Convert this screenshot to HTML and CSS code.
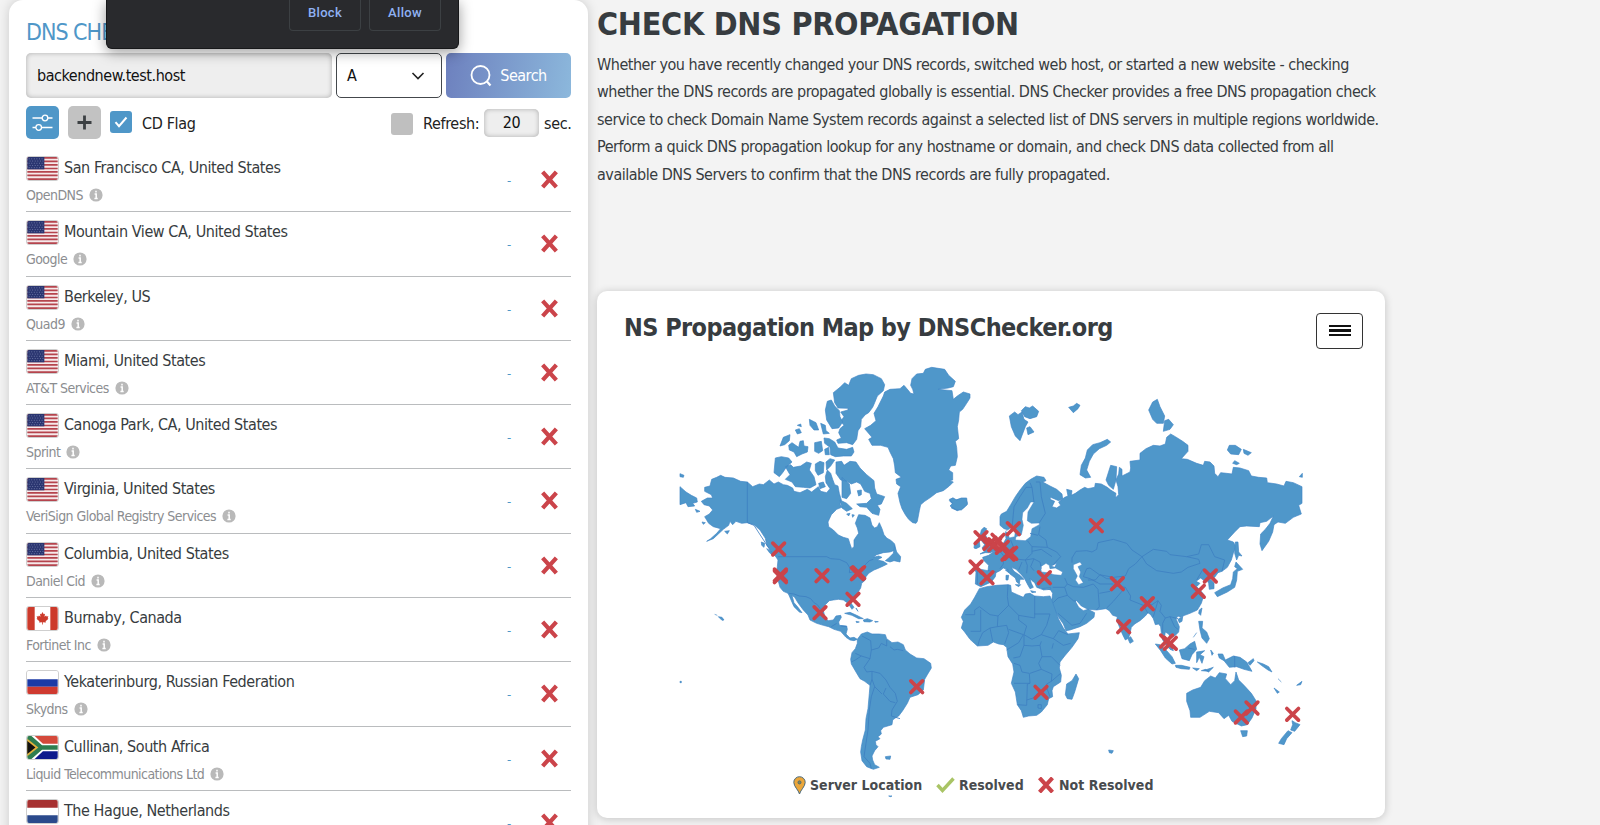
FILE: index.html
```html
<!DOCTYPE html>
<html lang="en">
<head>
<meta charset="utf-8">
<title>DNS Checker</title>
<link rel="stylesheet" href="styles.css">
</head>
<body>
<svg class="defs" width="0" height="0">
  <defs>
    <symbol id="cross" viewBox="0 0 18 18"><path d="M2.500 1.800 15.500 16.200M15.500 1.800 2.500 16.200" stroke="#cb444a" stroke-width="4"/></symbol>
    <symbol id="info" viewBox="0 0 14 14"><circle cx="7" cy="7" r="6.600" fill="#b9b9b9"/><path d="M7 2.700v1.800M5.600 6h1.600v4.300M5.400 10.500h3.300" stroke="#fff" stroke-width="1.500" fill="none"/></symbol>
    <symbol id="us" viewBox="0 0 33 25"><rect width="33" height="25" fill="#f6e9ea"/><path d="M0 1h33M0 4.800h33M0 8.600h33M0 12.500h33M0 16.300h33M0 20.100h33M0 24h33" stroke="#b5444d" stroke-width="1.900"/><rect width="18.500" height="13.400" fill="#2a3570"/><path d="M1.500 2h16M2.500 4.400h15M1.500 6.800h16M2.500 9.200h15M1.500 11.600h16" stroke="#8791bc" stroke-width=".8" stroke-dasharray="1 1.800"/></symbol>
    <symbol id="ca" viewBox="0 0 33 25"><rect width="33" height="25" fill="#fff"/><path d="M0 0h8v25H0zM25 0h8v25h-8z" fill="#cc3a2b"/><path d="m16.500 5.500 1.300 2.400 1.400-.6-.5 3.300 1.700-1.400.5 1.200 2-.3-.8 2.100.9.600-3.100 2.800.3 1.300-3.300-.4V19h-.8v-2.500l-3.300.4.300-1.300L10 12.800l.9-.6-.8-2.100 2 .3.500-1.200 1.700 1.400-.5-3.300 1.400.6z" fill="#cc3a2b"/></symbol>
    <symbol id="ru" viewBox="0 0 33 25"><rect width="33" height="25" fill="#fff"/><path d="M0 9h33v8H0z" fill="#1c3aa6"/><path d="M0 17h33v8H0z" fill="#cf3a30"/></symbol>
    <symbol id="za" viewBox="0 0 33 25"><rect width="33" height="25" fill="#fff"/><path d="M8 0h25v8.500H17z" fill="#d4493b"/><path d="M8 25h25v-8.500H17z" fill="#0d1a8c"/><path d="M0 0h4.500L16 10h17v5H16L4.500 25H0z" fill="#2e7d4f"/><path d="M0 3v19l12-9.500z" fill="#e2b13c"/><path d="M0 5.500v14l8.800-7z" fill="#111"/></symbol>
    <symbol id="nl" viewBox="0 0 33 25"><rect width="33" height="25" fill="#fff"/><path d="M0 0h33v8.300H0z" fill="#a73131"/><path d="M0 16.700h33V25H0z" fill="#2b4a8c"/></symbol>
  </defs>
</svg>

<div class="page">
  <section class="checker">
    <h2 class="checker-title">DNS CHECK</h2>
    <div class="search">
      <div class="host">backendnew.test.host</div>
      <div class="type"><span>A</span><svg width="14" height="14" viewBox="0 0 14 14"><path d="m1.500 4 5.500 5.500 5.500-5.500" fill="none" stroke="#222" stroke-width="1.600"/></svg></div>
      <div class="go"><svg width="22" height="22" viewBox="0 0 22 22"><circle cx="10.500" cy="10" r="9" fill="none" stroke="#fff" stroke-width="1.800"/><path d="m16.500 16 4 4.500" stroke="#fff" stroke-width="2.200"/></svg><span>Search</span></div>
    </div>
    <div class="options">
      <span class="tool tool-on"><svg width="21" height="18" viewBox="0 0 21 18"><g fill="none" stroke="#fff" stroke-width="1.300"><path d="M.5 4H10M16 4h4.500M.5 13.500H4M9.500 13.500h11"/><circle cx="13" cy="4" r="2.800"/><circle cx="6.700" cy="13.500" r="2.800"/></g></svg></span>
      <span class="tool"><svg width="15" height="15" viewBox="0 0 15 15"><path d="M7.500.5v14M.5 7.500h14" stroke="#3c4043" stroke-width="2.800"/></svg></span>
      <span class="check check-on"><svg width="14" height="12" viewBox="0 0 14 12"><path d="m1.500 6.200 3.500 4L12.500 1.500" fill="none" stroke="#fff" stroke-width="2"/></svg></span>
      <span class="flag-label">CD Flag</span>
      <span class="check refresh-check"></span>
      <span class="refresh-label">Refresh:</span>
      <span class="secs">20</span>
      <span class="sec-label">sec.</span>
    </div>
    <ul class="servers">
      <li class="server"><div class="who"><div class="place"><svg class="flag"><use href="#us"/></svg><span>San Francisco CA, United States</span></div><div class="isp"><span>OpenDNS</span><svg class="info"><use href="#info"/></svg></div></div><span class="dash">-</span><svg class="bad"><use href="#cross"/></svg></li>
      <li class="server"><div class="who"><div class="place"><svg class="flag"><use href="#us"/></svg><span>Mountain View CA, United States</span></div><div class="isp"><span>Google</span><svg class="info"><use href="#info"/></svg></div></div><span class="dash">-</span><svg class="bad"><use href="#cross"/></svg></li>
      <li class="server"><div class="who"><div class="place"><svg class="flag"><use href="#us"/></svg><span>Berkeley, US</span></div><div class="isp"><span>Quad9</span><svg class="info"><use href="#info"/></svg></div></div><span class="dash">-</span><svg class="bad"><use href="#cross"/></svg></li>
      <li class="server"><div class="who"><div class="place"><svg class="flag"><use href="#us"/></svg><span>Miami, United States</span></div><div class="isp"><span>AT&amp;T Services</span><svg class="info"><use href="#info"/></svg></div></div><span class="dash">-</span><svg class="bad"><use href="#cross"/></svg></li>
      <li class="server"><div class="who"><div class="place"><svg class="flag"><use href="#us"/></svg><span>Canoga Park, CA, United States</span></div><div class="isp"><span>Sprint</span><svg class="info"><use href="#info"/></svg></div></div><span class="dash">-</span><svg class="bad"><use href="#cross"/></svg></li>
      <li class="server"><div class="who"><div class="place"><svg class="flag"><use href="#us"/></svg><span>Virginia, United States</span></div><div class="isp"><span>VeriSign Global Registry Services</span><svg class="info"><use href="#info"/></svg></div></div><span class="dash">-</span><svg class="bad"><use href="#cross"/></svg></li>
      <li class="server"><div class="who"><div class="place"><svg class="flag"><use href="#us"/></svg><span>Columbia, United States</span></div><div class="isp"><span>Daniel Cid</span><svg class="info"><use href="#info"/></svg></div></div><span class="dash">-</span><svg class="bad"><use href="#cross"/></svg></li>
      <li class="server"><div class="who"><div class="place"><svg class="flag"><use href="#ca"/></svg><span>Burnaby, Canada</span></div><div class="isp"><span>Fortinet Inc</span><svg class="info"><use href="#info"/></svg></div></div><span class="dash">-</span><svg class="bad"><use href="#cross"/></svg></li>
      <li class="server"><div class="who"><div class="place"><svg class="flag"><use href="#ru"/></svg><span>Yekaterinburg, Russian Federation</span></div><div class="isp"><span>Skydns</span><svg class="info"><use href="#info"/></svg></div></div><span class="dash">-</span><svg class="bad"><use href="#cross"/></svg></li>
      <li class="server"><div class="who"><div class="place"><svg class="flag"><use href="#za"/></svg><span>Cullinan, South Africa</span></div><div class="isp"><span>Liquid Telecommunications Ltd</span><svg class="info"><use href="#info"/></svg></div></div><span class="dash">-</span><svg class="bad"><use href="#cross"/></svg></li>
      <li class="server"><div class="who"><div class="place"><svg class="flag"><use href="#nl"/></svg><span>The Hague, Netherlands</span></div></div><span class="dash">-</span><svg class="bad"><use href="#cross"/></svg></li>
    </ul>
  </section>

  <main class="main">
    <h1 class="headline">CHECK DNS PROPAGATION</h1>
    <p class="intro">Whether you have recently changed your DNS records, switched web host, or started a new website - checking<br>whether the DNS records are propagated globally is essential. DNS Checker provides a free DNS propagation check<br>service to check Domain Name System records against a selected list of DNS servers in multiple regions worldwide.<br>Perform a quick DNS propagation lookup for any hostname or domain, and check DNS data collected from all<br>available DNS Servers to confirm that the DNS records are fully propagated.</p>
    <section class="map-card">
      <header class="map-head">
        <h2 class="map-title">NS Propagation Map by DNSChecker.org</h2>
        <span class="menu"><i></i><i></i><i></i></span>
      </header>
      <svg class="map" viewBox="670 360 650 440" width="650" height="440">
        <defs><path id="m" d="M-17.500-17.500 17.500 17.500M17.500-17.500-17.500 17.500" stroke="#cb444a" stroke-width="11" stroke-linecap="round"/></defs>
        <g class="land" transform="translate(670 360) scale(.33333)">
          <path d="M104 382 120 378 125 358 140 352 152 346 165 352 190 354 212 364 232 366 248 380 268 372 280 374 298 360 312 372 325 366 340 374 352 376 368 384 372 394 390 398 412 388 425 396 445 380 452 394 470 398 480 386 468 368 466 350 472 330 482 340 488 358 494 374 504 378 508 400 514 420 510 432 515 442 500 448 484 464 474 486 476 500 490 510 505 525 520 532 535 536 540 552 545 566 552 560 552 540 560 528 566 520 562 504 556 490 562 474 566 464 585 466 600 474 606 496 614 504 622 500 628 488 636 506 642 524 650 534 664 542 674 552 676 570 660 576 640 578 620 584 610 592 626 588 636 592 622 600 640 604 652 612 640 618 622 626 612 630 596 640 588 650 586 660 575 670 572 684 562 700 548 716 542 728 552 742 546 748 534 730 520 720 505 718 490 720 478 722 466 734 460 752 466 776 476 782 490 780 498 768 512 766 514 772 506 786 508 796 530 798 532 808 528 822 540 834 552 832 562 838 552 842 540 840 528 832 512 814 492 808 476 800 460 796 440 790 420 780 414 765 400 750 385 730 374 712 366 706 372 728 384 742 396 758 388 756 372 740 364 722 358 708 354 700 340 694 330 682 324 660 320 640 322 620 324 600 316 588 304 580 300 568 290 555 286 535 270 510 252 494 232 488 215 490 198 484 188 494 180 484 176 496 160 508 145 522 130 536 110 544 122 536 140 520 152 506 130 500 116 490 104 470 118 462 128 450 118 438 102 434 94 424 112 414 128 414 124 404 104 394Z"/>
          <path d="M30 380 48 396 64 406 80 414 82 426 68 430 74 438 54 440 48 428 30 434ZM30 341 42 346 40 352 30 350ZM76 448 90 454 80 457ZM96 486 106 488 100 493ZM164 514 178 512 172 522ZM274 546 284 550 282 562 275 556ZM290 566 304 574 310 586 300 580Z"/>
          <path d="M584 206 602 196 618 182 612 160 624 140 640 108 644 96 660 88 690 86 702 76 714 90 722 100 732 102 728 88 722 76 726 56 740 42 760 40 766 28 785 22 824 28 836 46 856 64 850 80 835 84 804 88 846 92 850 118 862 108 880 96 900 102 900 114 890 130 878 148 868 156 866 180 862 200 866 236 856 244 860 262 862 290 856 316 842 318 836 330 848 338 848 360 838 362 850 366 838 378 820 392 800 398 782 412 764 424 752 434 748 452 742 484 738 490 728 488 716 478 706 464 696 446 690 428 684 400 692 380 680 372 678 358 694 352 684 344 676 338 674 318 670 296 660 276 654 262 632 256 606 256 596 238 606 232Z"/>
          <path d="M490 98 510 82 524 68 536 76 544 56 566 46 588 42 610 44 634 56 644 74 640 92 622 108 614 128 608 142 596 158 586 164 574 178 572 200 564 212 560 238 548 254 530 248 504 250 500 240 514 234 506 218 510 206 522 196 512 184 522 170 512 156 534 150 534 145 504 144 494 128Z"/>
          <path d="M466 150 472 124 484 120 494 138 508 152 510 170 518 186 506 204 486 206 470 180ZM462 234 478 236 494 246 504 264 530 268 548 262 552 276 544 288 520 288 496 290 482 284 480 262 464 250ZM498 306 515 304 522 316 540 304 558 306 570 324 590 344 612 362 614 384 620 402 644 410 634 432 622 436 630 448 626 466 606 460 590 442 570 440 560 432 590 430 604 416 600 400 584 394 572 372 560 366 544 372 530 364 512 360 498 340ZM516 352 538 372 542 400 530 416 516 412ZM510 420 530 430 547 446 530 454 516 444Z"/>
          <path d="M346 320 362 314 370 322 392 318 410 306 424 310 418 330 432 350 438 374 420 384 400 382 376 380 366 366 346 358 360 344ZM316 294 334 290 356 294 366 306 350 320 338 338 328 350 312 338ZM356 256 366 248 386 262 390 244 400 242 402 258 414 260 412 276 396 282 380 290 372 276 358 270ZM330 258 340 232 360 224 358 242 344 254ZM434 248 454 244 458 272 446 280 434 274ZM436 312 450 304 462 308 460 338 444 346 436 332ZM468 306 480 296 494 300 482 318 470 330ZM418 178 438 188 446 210 432 210 420 196ZM452 190 466 196 468 212 478 220 460 222ZM376 210 388 206 394 218 382 222ZM382 196 392 192 394 200ZM446 370 460 366 466 380 450 386ZM464 268 476 262 478 284 466 284ZM562 392 574 390 574 404 566 408ZM530 462 540 460 536 468ZM546 464 553 465 548 472ZM838 422 848 414 856 420 872 416 888 416 892 430 880 444 862 452 844 444 850 434Z"/>
          <path d="M656 594 670 580 674 556 680 576 692 590 690 606 672 602 660 606 646 602Z"/>
          <path d="M524 760 540 757 560 766 580 776 566 776 546 766ZM580 780 592 776 608 782 600 786 582 785ZM558 784 568 786 560 788ZM614 784 625 785 616 787ZM558 744 564 754 560 748ZM134 763 142 766M145 770 156 772 162 780 156 781ZM30 964h4v4h-4ZM656 1308h10l-4 2z"/>
          <path d="M562 838 574 822 592 816 606 822 628 822 646 824 650 836 666 848 684 846 700 854 706 870 720 882 740 894 762 896 782 910 784 924 772 944 764 958 760 990 744 1004 720 1012 712 1030 698 1052 686 1068 676 1074 668 1080 666 1094 640 1102 632 1112 634 1122 624 1130 630 1136 616 1144 618 1154 624 1160 614 1172 606 1188 608 1200 614 1214 628 1222 610 1228 590 1220 576 1202 572 1176 574 1160 578 1140 586 1110 588 1076 594 1046 598 1000 600 976 584 964 570 956 558 936 544 912 542 898 546 878 556 866 562 850ZM646 1190 662 1188 660 1198 648 1197Z"/>
        </g>
        <g class="border" transform="translate(670 360) scale(.33333)">
          <path d="M232 366V488L252 496 300 570M324 590H470L482 596 508 598 530 608 540 624 538 638 558 634 580 620 598 602 610 598M356 700 372 702 388 708 408 710 422 716 432 728 442 734 452 748M484 800 500 790M512 798 530 800M556 880 574 888 600 896 604 870 602 842 576 828M600 896 582 922 590 936 606 934 606 958 600 976M606 934 630 940 648 960 660 982 676 1000 682 1024 666 1050 664 1068 690 1076M648 984 640 1002 660 1024 676 1028M606 958 614 980 636 1002M614 980 604 1010 598 1050 594 1110 588 1150 582 1190 600 1210 604 1226M604 870 626 864 634 850 650 858 650 840M660 860 672 870 682 868 700 872M544 906 556 900 574 888"/>
        </g>
        <g class="land" transform="translate(940 380) scale(.33333)">
          <path d="M180 410 184 402 200 394 212 374 226 350 240 330 256 310 272 298 290 288 312 292 318 302 308 306 330 318 350 328 366 342 368 356 356 362 332 352 330 358 344 364 336 380 350 384 362 376 356 366 374 352 384 348 380 328 396 332 394 346 406 340 420 330 434 322 444 326 464 322 466 310 484 312 502 322 512 330 528 340 526 354 536 344 534 320 528 300 536 282 538 262 546 268 546 288 570 276 572 264 570 244 600 240 600 220 618 206 640 196 660 198 676 192 680 172 692 162 706 170 728 184 744 196 744 214 724 236 742 238 756 244 770 250 790 256 794 244 810 246 822 258 824 280 834 290 842 278 860 280 876 282 880 262 900 264 926 272 934 288 956 292 980 294 982 308 1010 312 1032 318 1038 304 1060 308 1086 320 1086 370 1076 376 1084 402 1060 412 1036 430 1014 426 1002 434 998 456 986 484 966 512 960 492 962 462 976 448 990 430 1000 408 980 424 960 428 958 440 920 438 900 440 884 456 862 480 880 486 888 500 880 520 874 540 862 562 846 574 834 578 824 592 810 596 822 608 822 626 808 628 806 610 800 598 790 600 782 594 768 604 780 610 770 620 780 630 792 644 784 670 772 690 750 700 734 706 722 712 714 708 708 716 718 740 716 756 704 768 692 774 686 762 676 756 674 768 688 786 698 802 700 812 690 808 678 794 668 780 664 760 662 740 656 732 646 734 640 716 632 704 624 698 616 708 600 722 584 732 574 742 570 760 566 774 556 780 548 764 538 740 530 720 532 710 518 706 508 692 498 686 470 690 444 688 424 678 410 662 406 664 416 682 430 692 444 688 464 698 462 712 440 730 420 740 390 750 378 752 370 732 356 712 344 690 332 674 336 656 338 640 332 630 320 626 306 628 290 622 284 608 276 602 270 596 274 610 280 622 270 626 262 612 254 596 244 584 228 568 214 562 222 574 240 586 252 598 240 598 238 612 230 606 226 594 210 582 200 568 190 564 180 572 168 578 166 590 154 606 136 614 122 620 106 612 108 576 104 570 112 566 144 572 146 556 130 540 128 532 146 526 160 516 176 506 190 490 198 476 196 458 206 450 192 446 180 436Z"/>
          <path d="M120 522 134 514 126 504 134 494 126 484 118 476 124 450 132 442 140 446 134 460 144 480 158 500 166 512 150 518 136 518ZM102 504 104 486 118 484 120 500 108 506ZM28 358 40 354 50 360 64 354 80 354 82 374 64 390 50 390 30 378 38 370ZM208 108 224 96 234 104 246 96 252 118 264 126 256 140 240 182 226 168 214 140ZM244 92 256 80 268 84 278 78 296 94 290 110 270 116 254 110ZM260 144 270 140 282 156 264 164ZM386 82 400 78 410 70 420 76 414 86 400 98ZM420 284 424 256 436 234 442 210 458 194 480 188 502 178 512 186 500 196 478 206 460 222 448 244 440 270 452 292 436 294ZM498 300 512 256 530 260 528 300 520 328 506 316ZM626 90 638 66 652 58 660 80 674 108 670 130 650 130 638 118ZM670 154 674 122 686 118 700 134 690 148ZM862 210 868 196 886 196 904 208 896 224 872 222ZM910 208 934 218 924 226 912 220ZM878 250 884 242 898 250 890 254ZM1078 290 1087 280V292ZM886 486 894 486 896 516 906 528 896 526 890 540 884 520ZM824 638 848 624 872 614 878 596 880 576 892 566 884 560 888 546 908 568 892 574 890 600 884 622 862 636 832 650ZM778 690 786 684 782 706 776 700ZM714 718 728 710 726 724 718 728ZM564 776 572 770 580 784 570 790Z"/>
          <path d="M118 626 140 620 170 616 204 614 212 616 214 636 232 644 250 652 256 642 270 640 284 648 310 650 330 648 336 662 346 690 356 718 370 744 384 762 418 758 414 776 396 802 374 828 360 846 358 864 364 886 362 906 340 920 336 932 338 950 326 956 322 974 304 996 290 1006 266 1008 250 1012 244 992 232 974 226 936 214 910 222 876 218 852 204 830 200 802 190 794 176 792 160 786 144 796 112 798 90 778 74 756 64 744 70 724 64 712 74 690 92 672 104 652ZM376 944 380 912 396 902 408 882 416 896 404 936 396 958 382 956ZM292 622 300 622M306 626 332 622 332 628 310 630ZM226 614 242 614 236 620ZM196 570 204 568 206 578ZM198 586 206 586 204 600 198 600ZM272 632 288 636 276 638ZM506 1110 520 1112 516 1120 508 1118Z"/>
          <path d="M646 792 660 794 680 812 696 830 706 850 696 852 676 834 662 812ZM706 856 724 856 750 862 748 868 724 866 708 862ZM718 810 734 806 750 792 764 784 770 808 756 824 748 842 726 836ZM770 816 784 814 794 812 780 824 792 830 786 850 778 832 770 848ZM776 724 788 724 786 744 800 756 808 776 800 790 786 774 780 750ZM760 772 770 758M758 864 778 866 770 872ZM784 872 796 868 806 874ZM796 870 820 862 806 876ZM812 810 820 820 816 826ZM834 822 848 822 856 840 880 828 900 832 920 846 936 874 912 868 890 860 868 862 852 842 838 834ZM924 848 940 836 942 842 930 856ZM952 846 970 852 986 860 996 876 984 870 964 856ZM1002 924 1018 936 1012 940ZM1014 896 1024 906M1070 916 1086 904 1082 914Z"/>
          <path d="M740 940 758 930 782 922 794 902 812 888 826 894 838 878 860 882 856 896 872 914 884 902 888 876 896 900 912 916 934 940 948 962 948 986 936 1014 922 1034 904 1038 888 1030 876 1024 866 1006 852 1016 836 998 808 994 780 1012 752 1012 750 992 740 964ZM902 1052 922 1052 920 1068 908 1070ZM1056 1022 1066 1028 1080 1034 1064 1054 1052 1050 1058 1034ZM1044 1052 1056 1058 1040 1076 1032 1094 1016 1090 1024 1076Z"/>
        </g>
        <g class="water" transform="translate(940 380) scale(.33333)">
          <path d="M282 366 272 366 262 384 248 398 246 418 250 436 244 464 228 470 226 480 256 482 272 470 276 446 298 434 298 429 274 430 262 422 264 396ZM400 554 420 546 426 554 414 560 422 576 418 590 430 608 416 614 406 600 412 588 400 566ZM304 576 302 560 318 550 328 556 330 566 346 564 368 576 364 586 342 584 322 578ZM334 558 350 550 344 562ZM216 442 228 440 224 470 208 474 204 460 196 454Z"/>
        </g>
        <g class="border" transform="translate(940 380) scale(.33333)">
          <path d="M216 446 222 380 240 350 258 322 276 322 282 366M276 322 270 308M288 306 300 306 304 350 316 400 298 428M300 440 296 464 318 480 322 502 350 516 362 530 340 554M396 534 408 514 440 512 456 516 470 508 474 488 520 478 560 490 576 510 606 530 586 552 566 566 556 588 520 592 478 584 450 564 440 566 430 590M396 534 396 548M606 530 640 508 680 514 690 524 740 530 776 538 780 550 744 562 724 576 700 580 650 572 620 552 606 530M740 530 776 522 784 494 806 494 824 530 854 540 846 574M262 482 276 500 276 520 256 540 214 536 220 500 212 480M276 500 322 502M270 460 294 466M256 540 280 536 300 546 304 566M176 510 190 526 190 552 180 566M112 572V612M144 572 168 576M256 540 262 556 260 580M282 536 272 560 282 572M246 546 236 570M276 514 304 508 336 530"/>
          <path d="M374 594 382 612 374 622 338 622M374 622 382 646 354 654 340 668M382 646 400 662 408 664M382 612 400 620 430 622 460 612 474 628 478 680 470 690M430 590 450 596 480 612 520 612M478 640 510 634 524 618 556 622 544 636 520 664 500 684M556 622 572 648 570 660 610 676 636 674 654 662 664 676 660 694 676 714 690 710 714 716M610 676 624 700M654 662 646 690 640 710M668 760 668 730 676 714M690 710 704 740 714 748M354 700 396 736 420 730 440 700M444 600 466 600 480 584 500 596 530 598M790 566 770 600"/>
          <path d="M204 614 202 650 206 676 236 706 236 720 260 738 252 764 276 778 304 764 320 736 330 702M284 648V702H330M284 702V714L236 706M206 676 174 708 150 704 118 680 104 690V704H76M122 690 122 754H92M174 708 172 740 150 744 128 758 118 780 114 796M150 744 158 784M172 740 200 736 206 758 194 792M206 748 250 764 236 788 200 810M252 764 252 796 240 830 220 834M252 796 276 798 300 796 304 784M304 764 340 776 356 752 384 764M300 796 306 830 296 850 304 868 336 882 334 904M222 850 240 856 246 876 268 880 270 910H222M336 806 340 790M306 830 334 830 360 856M304 868 270 880M270 910 262 912 260 976 232 974M260 960 280 954 300 932 322 928 320 912 334 904 362 880M322 928 330 950M294 974 304 974 304 986 294 984ZM340 776 370 796 392 790M884 828V862M744 804 764 808"/>
        </g>
        <g transform="translate(670 360) scale(.33333)">
          <use href="#m" x="326" y="567"/><use href="#m" x="331" y="645"/><use href="#m" x="331" y="650"/><use href="#m" x="456" y="647"/><use href="#m" x="562" y="641"/><use href="#m" x="566" y="638"/><use href="#m" x="549" y="718"/><use href="#m" x="450" y="758"/><use href="#m" x="740" y="980"/>
        </g>
        <g transform="translate(940 380) scale(.33333)">
          <use href="#m" x="123" y="473"/><use href="#m" x="150" y="490"/><use href="#m" x="164" y="494"/><use href="#m" x="174" y="481"/><use href="#m" x="187" y="502"/><use href="#m" x="204" y="522"/><use href="#m" x="212" y="520"/><use href="#m" x="220" y="446"/><use href="#m" x="469" y="437"/><use href="#m" x="108" y="561"/><use href="#m" x="141" y="593"/><use href="#m" x="313" y="593"/><use href="#m" x="532" y="611"/><use href="#m" x="622" y="671"/><use href="#m" x="551" y="740"/><use href="#m" x="811" y="588"/><use href="#m" x="775" y="634"/><use href="#m" x="680" y="783"/><use href="#m" x="691" y="790"/><use href="#m" x="303" y="937"/><use href="#m" x="904" y="1011"/><use href="#m" x="936" y="984"/><use href="#m" x="1058" y="1003"/>
        </g>
      </svg>
      <div class="legend">
        <svg width="13" height="19" viewBox="0 0 13 19"><path d="M6.500 18C5.500 14 .8 10.500.8 6.400a5.700 5.700 0 0 1 11.400 0C12.200 10.500 7.500 14 6.500 18Z" fill="#eba63a" stroke="#4a6a7c"/><circle cx="6.500" cy="6.400" r="1.500" fill="#8a8a4a" stroke="#4a6a7c"/></svg>
        <span class="leg-server">Server Location</span>
        <svg width="19" height="16" viewBox="0 0 19 16"><path d="m1.500 8 5 5.500L17.500 1.500" fill="none" stroke="#a9c465" stroke-width="3.400"/></svg>
        <span class="leg-ok">Resolved</span>
        <svg class="leg-cross" width="16" height="16" viewBox="1 1 16 16"><use href="#cross" width="18" height="18"/></svg>
        <span class="leg-no">Not Resolved</span>
      </div>
    </section>
  </main>
</div>

<div class="prompt"><span class="prompt-btn">Block</span><span class="prompt-btn">Allow</span></div>
</body>
</html>
```
FILE: styles.css
```css
* { box-sizing: border-box; }
body {
  margin: 0;
  height: 825px;
  overflow: hidden;
  background: #f3f3f3;
  color: #373c40;
  font-family: "DejaVu Sans Condensed", "DejaVu Sans", sans-serif;
  font-stretch: condensed;
  font-size: 16px;
}
.defs { position: absolute; }
h1, h2, p, ul { margin: 0; padding: 0; }
.page { display: flex; align-items: flex-start; gap: 9px; padding-left: 9px; }

.checker {
  width: 579px;
  height: 850px;
  padding: 17px 17px 0;
  background: #fff;
  border-radius: 14px 14px 0 0;
  box-shadow: 0 0 12px rgba(0, 0, 0, .17);
}
.checker-title { height: 36px; line-height: 31px; font-size: 23px; font-weight: 400; color: #4f97c8; letter-spacing: -1px; white-space: nowrap; }
.search { display: flex; gap: 4px; height: 45px; }
.host { width: 306px; padding-left: 11px; line-height: 46px; color: #111; background: #eee; border-radius: 5px; box-shadow: inset 0 0 5px rgba(0, 0, 0, .28); letter-spacing: -.45px; }
.type { display: flex; align-items: center; justify-content: space-between; width: 106px; padding: 0 16px 0 10px; border: 1px solid #44484c; border-radius: 5px; color: #111; }
.go { display: flex; align-items: center; justify-content: center; gap: 8px; width: 125px; border-radius: 5px; color: #fff; background: linear-gradient(100deg, #6d80be, #8cb8dc); letter-spacing: -.5px; }
.options { display: flex; align-items: center; height: 33px; margin-top: 8px; color: #222; white-space: nowrap; letter-spacing: -.35px; line-height: 21px; }
.tool { display: flex; align-items: center; justify-content: center; width: 33px; height: 33px; margin-right: 9px; border-radius: 5px; background: #c2c2c2; }
.tool-on { background: #4f97c8; }
.check { display: flex; align-items: center; justify-content: center; width: 22px; height: 22px; border-radius: 3px; background: #bfbfbf; }
.check-on { margin-top: -1px; background: #4f97c8; }
.flag-label { margin-left: 10px; padding-top: 1px; }
.refresh-check { margin: 3px 10px 0 auto; }
.refresh-label { width: 61px; padding-top: 1px; }
.secs { width: 55px; height: 28px; line-height: 28px; text-align: center; border-radius: 5px; background: #eee; box-shadow: inset 0 0 5px rgba(0, 0, 0, .28); color: #111; }
.sec-label { width: 32px; padding: 1px 0 0 5px; }

.servers { list-style: none; margin-top: 9px; }
.server { display: flex; align-items: flex-start; height: 64.300px; padding-top: 8px; border-bottom: 1.500px solid #babcbe; white-space: nowrap; }
.who { flex: 1; }
.place { display: flex; gap: 5px; height: 26px; line-height: 23px; letter-spacing: -.43px; }
.flag { width: 33px; height: 25px; border-radius: 3px; border: 1px solid #cfcfcf; }
.isp { display: flex; align-items: center; gap: 6px; height: 26px; font-size: 14px; color: #8b8d90; letter-spacing: -.55px; }
.info { width: 14px; height: 14px; }
.dash { width: 5px; margin: 15px 28px 0 0; line-height: 20px; font-size: 13px; color: #4f97c8; }
.bad { width: 19px; height: 19px; margin: 14px 12px 0 0; }

.main { width: 788px; white-space: nowrap; }
.headline { height: 50px; padding-top: 4px; line-height: 40px; font-size: 32px; letter-spacing: -.27px; color: #373c40; }
.intro { height: 240.500px; padding-top: .6px; line-height: 27.500px; letter-spacing: -.48px; }
.map-card { height: 527px; background: #fff; border-radius: 10px; box-shadow: 0 1px 8px rgba(0, 0, 0, .2); }
.map-head { display: flex; justify-content: space-between; align-items: flex-start; height: 69.500px; padding: 22px 22px 0 27px; }
.map-title { line-height: 30px; font-size: 25px; letter-spacing: -.57px; }
.menu { display: flex; flex-direction: column; align-items: center; justify-content: center; gap: 2px; width: 47px; height: 36px; border: 1px solid #333; border-radius: 4px; }
.menu i { width: 22px; height: 2.500px; background: #111; }
.map { display: block; margin-left: 73px; clip-path: inset(0 5px 0 8px); }
.land { fill: #4f97ca; stroke: #4186c6; stroke-width: 2; stroke-linejoin: round; }
.water { fill: #fff; stroke: #4186c6; stroke-width: 1.500; }
.border { fill: none; stroke: #3d80c2; stroke-width: 2.500; stroke-linejoin: round; }
.legend { display: flex; align-items: center; position: relative; height: 22px; margin: -26px 0 0 196px; font-size: 14px; font-weight: 700; color: #484b4e; letter-spacing: .03px; }
.legend span { margin-left: 4px; }
.leg-server { width: 126px; }
.leg-ok { width: 79px; }
.legend .leg-no { margin-left: 5px; }

.prompt { position: absolute; left: 106px; top: 0; display: flex; gap: 8px; justify-content: flex-end; width: 353px; height: 49px; padding-right: 17px; background: #292a2d; border: 1px solid #17181a; border-top: 0; border-radius: 0 0 6px 6px; box-shadow: 0 3px 14px rgba(0, 0, 0, .4); }
.prompt-btn { width: 72px; height: 31px; padding-top: 4px; text-align: center; font: 500 13px/18px Roboto, sans-serif; letter-spacing: .3px; color: #8fb1f3; border: 1px solid #3c4043; border-top: 0; border-radius: 0 0 4px 4px; }
```
